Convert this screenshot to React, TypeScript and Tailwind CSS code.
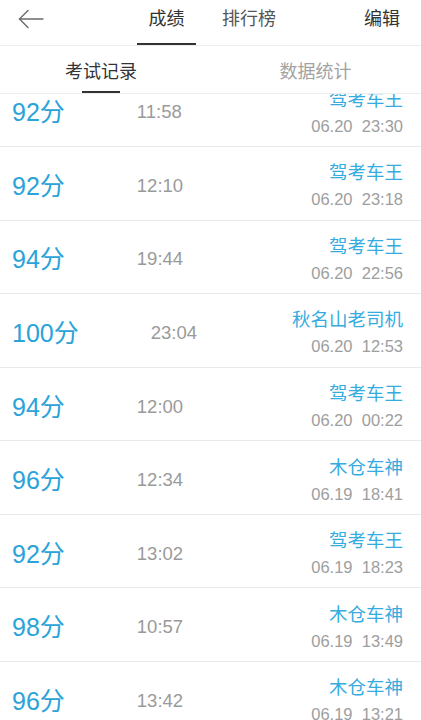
const records = [
  { score: "92分", time: "11:58", name: "驾考车王", date: "06.20  23:30" },
  { score: "92分", time: "12:10", name: "驾考车王", date: "06.20  23:18" },
  { score: "94分", time: "19:44", name: "驾考车王", date: "06.20  22:56" },
  { score: "100分", time: "23:04", name: "秋名山老司机", date: "06.20  12:53" },
  { score: "94分", time: "12:00", name: "驾考车王", date: "06.20  00:22" },
  { score: "96分", time: "12:34", name: "木仓车神", date: "06.19  18:41" },
  { score: "92分", time: "13:02", name: "驾考车王", date: "06.19  18:23" },
  { score: "98分", time: "10:57", name: "木仓车神", date: "06.19  13:49" },
  { score: "96分", time: "13:42", name: "木仓车神", date: "06.19  13:21" },
];

const font = { fontFamily: '"Liberation Sans", "Noto Sans CJK SC", sans-serif' };

const BackArrow = () => (
  <svg width="26" height="20" viewBox="0 0 26 20" fill="none" stroke="#6b6b6b" strokeWidth="1.4" strokeLinecap="round">
    <path d="M25 10H1.5" />
    <path d="M10 1.5L1.5 10L10 18.5" />
  </svg>
);

export default function App() {
  return (
    <div className="h-[720px] w-full overflow-hidden bg-white flex flex-col" style={font}>
      {/* top header */}
      <div className="h-[46px] flex items-stretch border-b border-[#ececec] shrink-0">
        <div className="w-[137px] pl-[18px] pt-[9px]">
          <BackArrow />
        </div>
        <div className="w-[59px] flex flex-col items-center">
          <span className="pt-[7px] text-[18px] leading-[24px] text-[#333]">成绩</span>
          <div className="mt-auto h-[2px] w-full bg-[#333]" />
        </div>
        <div className="ml-[26px] pt-[7px] text-[18px] leading-[24px] text-[#555]">排行榜</div>
        <div className="ml-auto pr-[21px] pt-[7px] text-[18px] leading-[24px] text-[#333]">编辑</div>
      </div>

      {/* sub tabs */}
      <div className="h-[48px] flex border-b border-[#ececec] shrink-0">
        <div className="w-[202px] flex flex-col items-center">
          <span className="pt-[14px] text-[18px] leading-[24px] text-[#333]">考试记录</span>
          <div className="mt-auto h-[2px] w-[38px] bg-[#333]" />
        </div>
        <div className="flex-1 pl-[8px] flex justify-center">
          <span className="pt-[14px] text-[18px] leading-[24px] text-[#a3a3a3]">数据统计</span>
        </div>
      </div>

      {/* record list, scrolled slightly */}
      <div className="flex-1 overflow-hidden">
        <div className="-mt-[20.5px]">
          {records.map((r, i) => (
            <div key={i} className="h-[73.57px] flex items-center pt-[5px] pl-[12px] pr-[18px] border-b border-[#e9e9e9]">
              <span className="text-[25px] leading-[30px] text-[#2aa3d9]">{r.score}</span>
              <span className="ml-[72px] text-[18.5px] leading-[24px] text-[#9a9a9a]">{r.time}</span>
              <div className="ml-auto flex flex-col items-end">
                <span className="text-[18.5px] leading-[24px] text-[#36abe0]">{r.name}</span>
                <span className="mt-[3px] text-[16.5px] leading-[22px] text-[#9e9e9e] whitespace-pre">{r.date}</span>
              </div>
            </div>
          ))}
        </div>
      </div>
    </div>
  );
}
